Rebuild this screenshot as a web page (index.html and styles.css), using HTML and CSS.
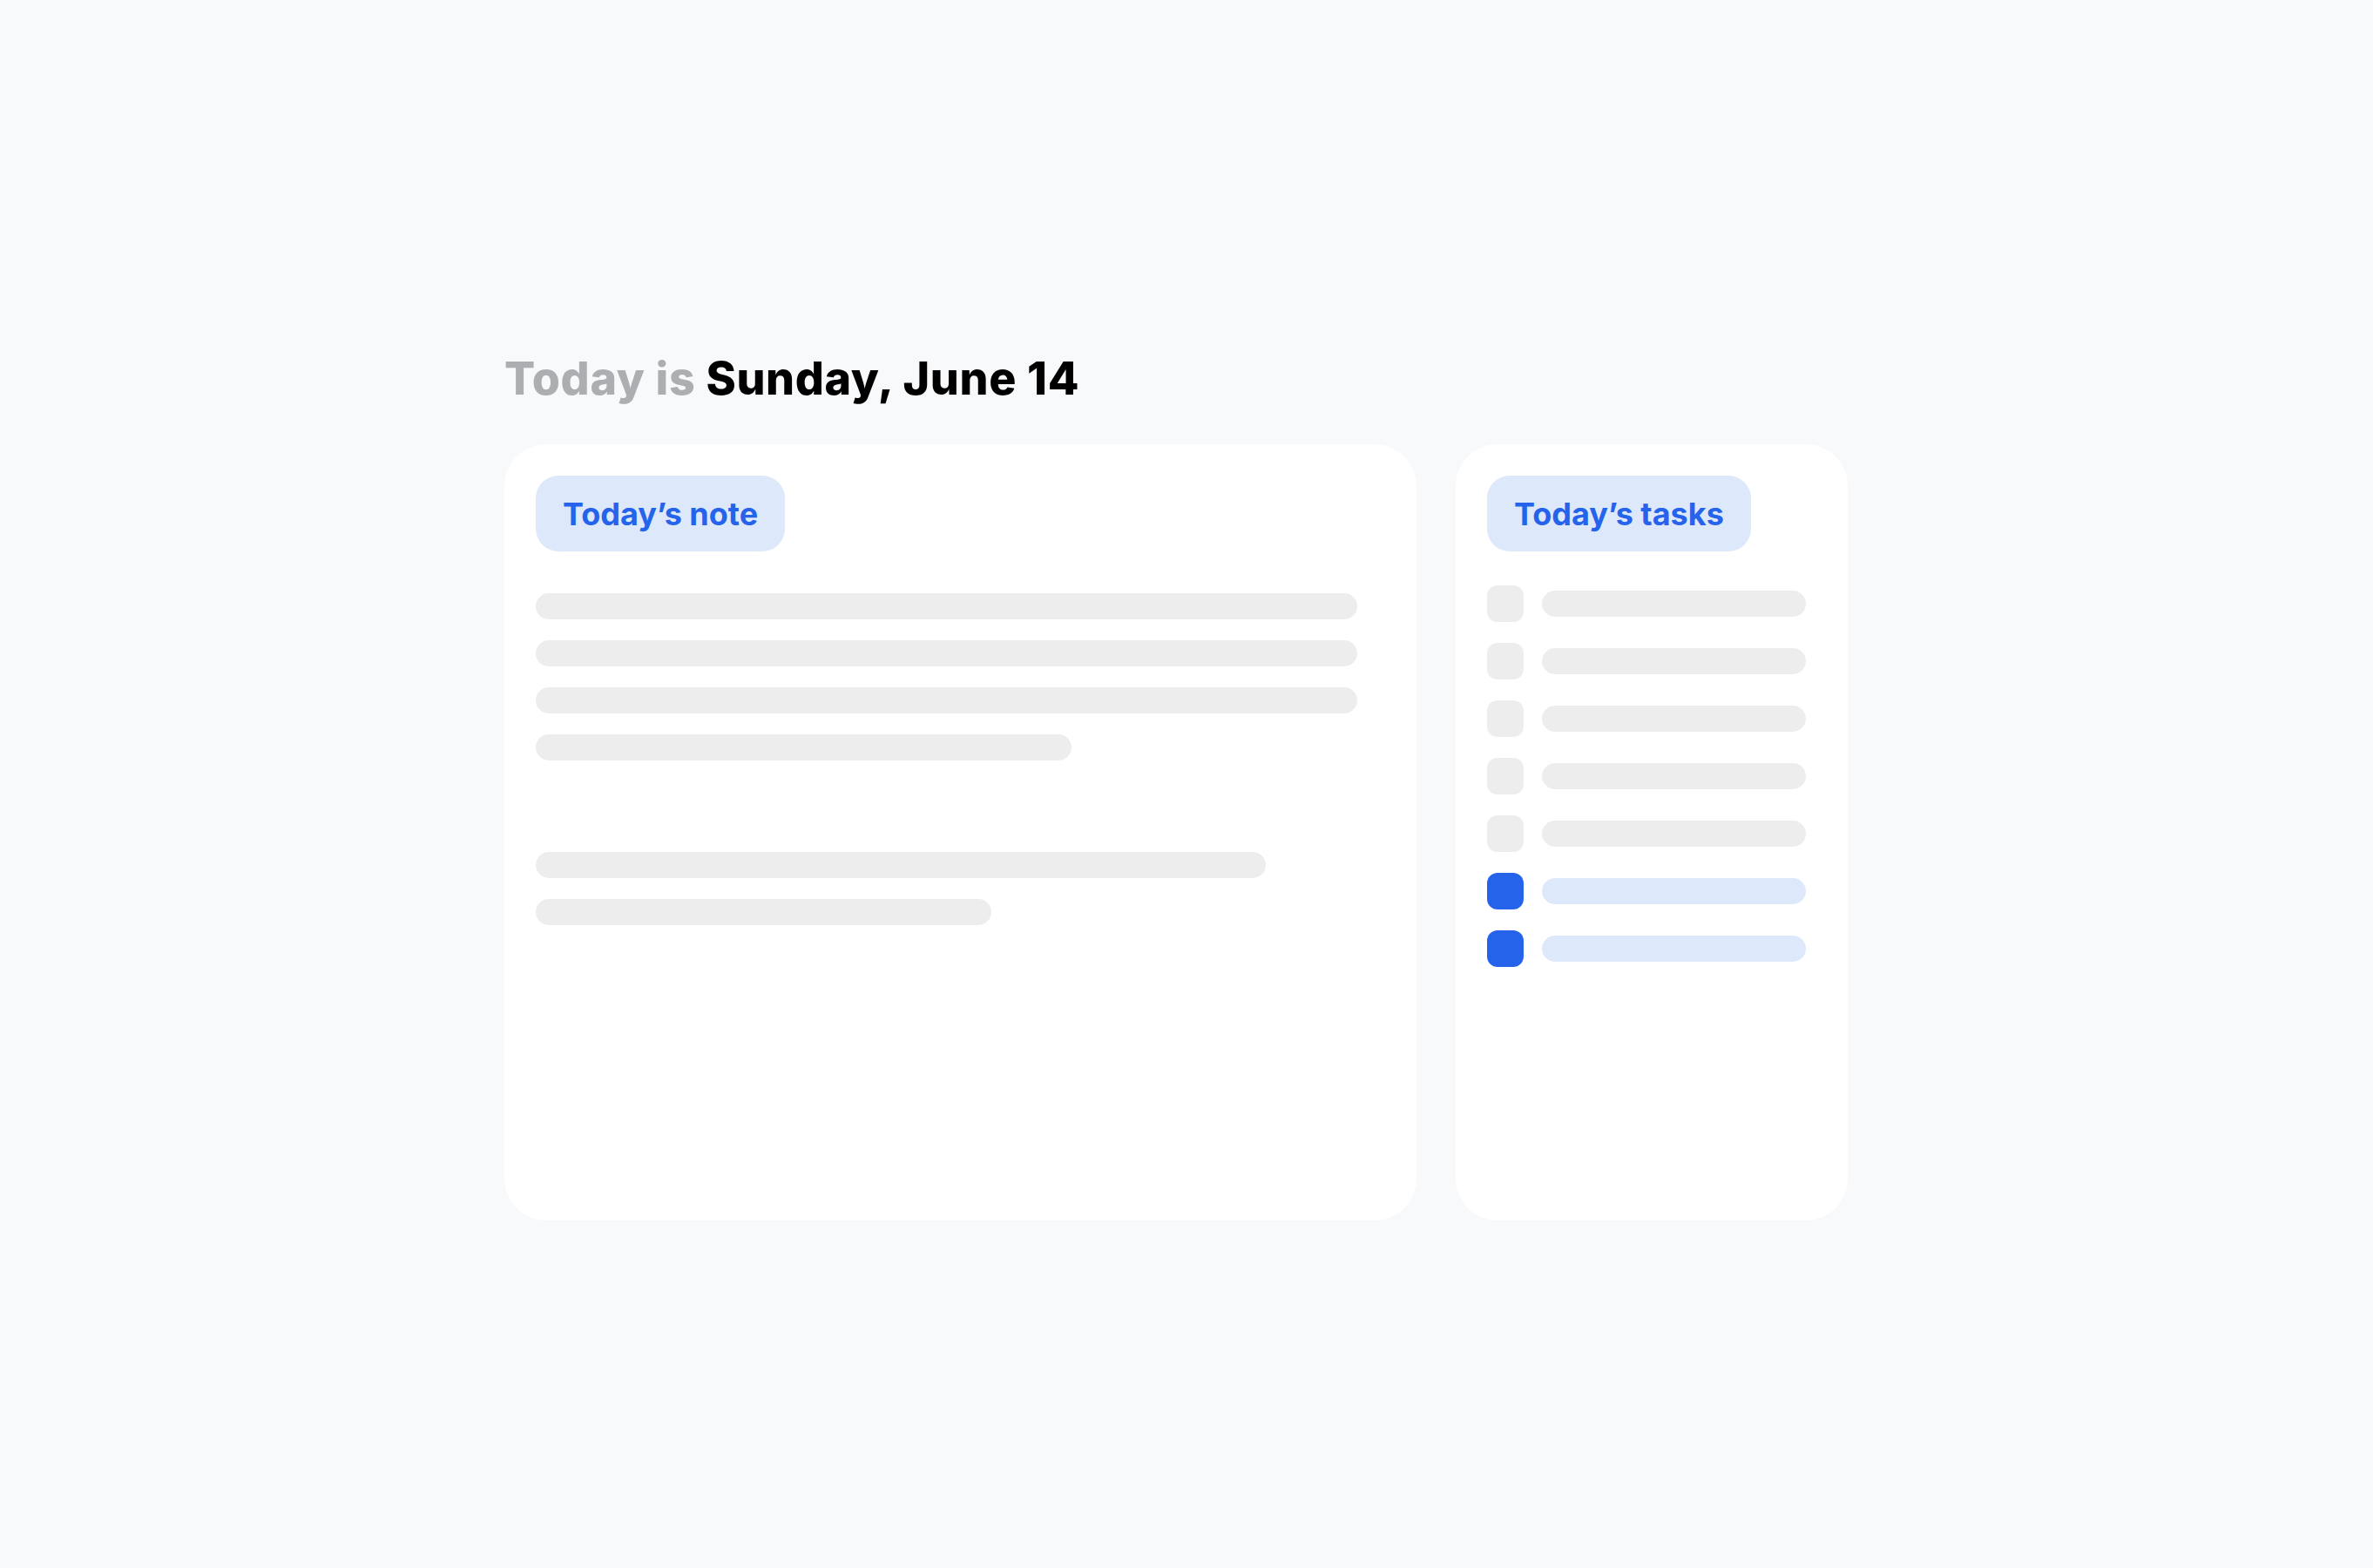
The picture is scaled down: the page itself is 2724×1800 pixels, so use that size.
FILE: index.html
```html
<!DOCTYPE html>
<html lang="en">
<head>
<meta charset="utf-8">
<title>Today</title>
<link rel="stylesheet" href="styles.css">
</head>
<body>
<main class="page">
  <h1 class="title"><span class="muted">Today is</span> Sunday, June 14</h1>
  <div class="cards">
    <section class="card note">
      <div class="badge">Today’s note</div>
      <div class="lines">
        <div class="line w943"></div>
        <div class="line w943"></div>
        <div class="line w943"></div>
        <div class="line w615"></div>
        <div class="spacer"></div>
        <div class="line w838"></div>
        <div class="line w523"></div>
      </div>
    </section>
    <section class="card tasks">
      <div class="badge">Today’s tasks</div>
      <ul class="task-list">
        <li class="task"><span class="check"></span><span class="task-line"></span></li>
        <li class="task"><span class="check"></span><span class="task-line"></span></li>
        <li class="task"><span class="check"></span><span class="task-line"></span></li>
        <li class="task"><span class="check"></span><span class="task-line"></span></li>
        <li class="task"><span class="check"></span><span class="task-line"></span></li>
        <li class="task done"><span class="check"></span><span class="task-line"></span></li>
        <li class="task done"><span class="check"></span><span class="task-line"></span></li>
      </ul>
    </section>
  </div>
</main>
</body>
</html>
```

FILE: styles.css
```css
html, body {
  margin: 0;
  padding: 0;
}
body {
  background: #f8f9fb;
  font-family: Inter, "Noto Sans", "Liberation Sans", sans-serif;
  width: 2724px;
  height: 1800px;
  overflow: hidden;
}
.page {
  padding: 403px 0 0 579px;
}
.title {
  margin: 0;
  font-size: 52px;
  line-height: 63px;
  font-weight: 800;
  color: #000;
  letter-spacing: 0.65px;
}
.muted {
  color: #adaeb1;
}
.cards {
  display: flex;
  gap: 45px;
  margin-top: 44px;
}
.card {
  background: #fff;
  border-radius: 48px;
  height: 891px;
  box-sizing: border-box;
  padding: 36px;
}
.note {
  width: 1047px;
}
.tasks {
  width: 450px;
}
.badge {
  display: inline-flex;
  align-items: center;
  height: 87px;
  box-sizing: border-box;
  padding: 0 31px;
  border-radius: 26px;
  background: #dde8fb;
  color: #2563eb;
  font-size: 36px;
  font-weight: 700;
}
.lines {
  display: flex;
  flex-direction: column;
  gap: 24px;
  margin-top: 48px;
}
.line {
  height: 30px;
  border-radius: 15px;
  background: #ededed;
}
.spacer {
  height: 57px;
}
.w943 { width: 943px; }
.w615 { width: 615px; }
.w838 { width: 838px; }
.w523 { width: 523px; }
.task-list {
  list-style: none;
  margin: 39px 0 0;
  padding: 0;
  display: flex;
  flex-direction: column;
  gap: 24px;
}
.task {
  display: flex;
  align-items: center;
  gap: 21px;
}
.check {
  width: 42px;
  height: 42px;
  border-radius: 12px;
  background: #ededed;
}
.task-line {
  width: 303px;
  height: 30px;
  border-radius: 15px;
  background: #ededed;
}
.done .check {
  background: #2563eb;
}
.done .task-line {
  background: #dde8fb;
}
```
